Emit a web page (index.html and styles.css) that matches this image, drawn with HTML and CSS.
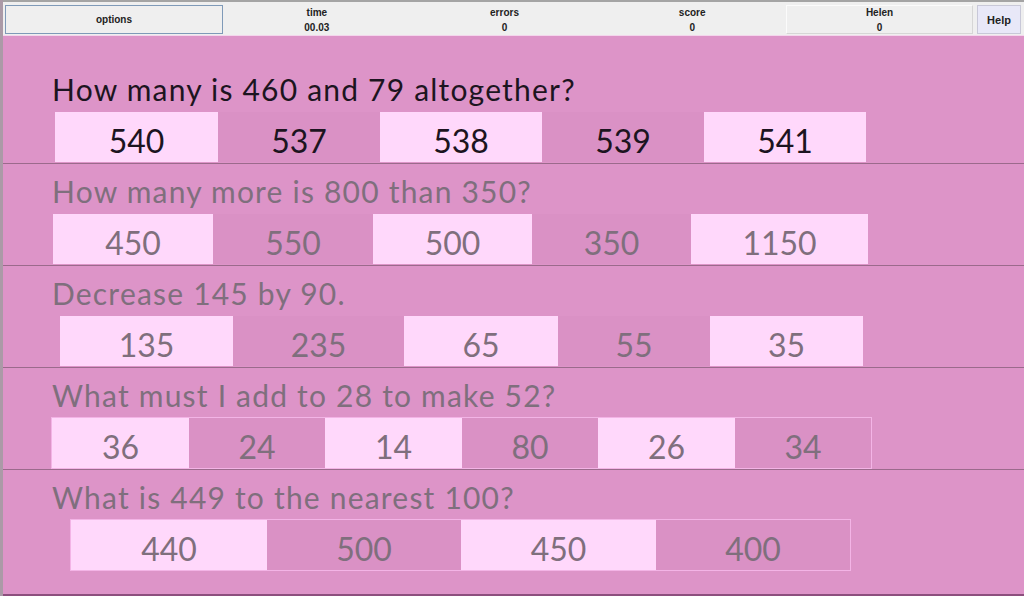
FILE: index.html
```html
<!DOCTYPE html>
<html lang="en">
<head>
    <meta charset="UTF-8">
    <title>Maths Quiz</title>
    <link rel="stylesheet" href="styles.css">
</head>
<body>

<div class="window">
    <!-- Top bar -->
    <div class="topbar">
        <div class="tb-options">options</div>
        <div class="tb-stat"><span>time</span><span>00.03</span></div>
        <div class="tb-stat"><span>errors</span><span>0</span></div>
        <div class="tb-stat"><span>score</span><span>0</span></div>
        <div class="tb-player"><span>Helen</span><span>0</span></div>
        <div class="tb-help">Help</div>
    </div>

    <!-- Questions -->
    <div class="quiz">
        <div class="row current">
            <div class="question">How many is 460 and 79 altogether?</div>
            <div class="answers r1">
                <div class="ans light">540</div>
                <div class="ans dark">537</div>
                <div class="ans light">538</div>
                <div class="ans dark">539</div>
                <div class="ans light">541</div>
            </div>
        </div>
        <div class="row">
            <div class="question">How many more is 800 than 350?</div>
            <div class="answers r2">
                <div class="ans light">450</div>
                <div class="ans dark">550</div>
                <div class="ans light">500</div>
                <div class="ans dark">350</div>
                <div class="ans light">1150</div>
            </div>
        </div>
        <div class="row">
            <div class="question">Decrease 145 by 90.</div>
            <div class="answers r3">
                <div class="ans light">135</div>
                <div class="ans dark">235</div>
                <div class="ans light">65</div>
                <div class="ans dark">55</div>
                <div class="ans light">35</div>
            </div>
        </div>
        <div class="row">
            <div class="question">What must I add to 28 to make 52?</div>
            <div class="answers r4 outlined">
                <div class="ans light">36</div>
                <div class="ans dark">24</div>
                <div class="ans light">14</div>
                <div class="ans dark">80</div>
                <div class="ans light">26</div>
                <div class="ans dark">34</div>
            </div>
        </div>
        <div class="row last">
            <div class="question">What is 449 to the nearest 100?</div>
            <div class="answers r5 outlined">
                <div class="ans light">440</div>
                <div class="ans dark">500</div>
                <div class="ans light">450</div>
                <div class="ans dark">400</div>
            </div>
        </div>
    </div>
</div>

</body>
</html>
```

FILE: styles.css
```css
body {
    margin: 0;
    padding: 0;
    background-color: #dd94c8;
    font-family: 'Liberation Sans', Arial, sans-serif;
}

.window {
    height: 596px;
    display: flex;
    flex-direction: column;
    border-left: 3px solid #ab9aa7;
    box-sizing: border-box;
}

/* top bar */
.topbar {
    height: 36px;
    box-sizing: border-box;
    display: flex;
    align-items: stretch;
    padding: 3px 3px 1px 2px;
    background-color: #efefef;
    border-top: 2px solid #a4a4a4;
    border-bottom: 1px solid #f4d6ec;
    font-size: 10px;
    font-weight: bold;
    color: #222;
}

.tb-options {
    width: 218px;
    box-sizing: border-box;
    border: 1px solid #7f9ab8;
    display: flex;
    align-items: center;
    justify-content: center;
}

.tb-stat, .tb-player {
    display: flex;
    flex-direction: column;
    align-items: center;
    justify-content: center;
    gap: 4px;
}

.tb-stat {
    flex: 1;
}

.tb-player {
    width: 187px;
    box-sizing: border-box;
    border: 1px solid #fbfbfb;
    border-right-color: #d6d6d6;
    border-bottom-color: #d6d6d6;
}

.tb-help {
    width: 44px;
    margin-left: 4px;
    box-sizing: border-box;
    background-color: #e8e8f8;
    border: 1px solid #c8c8d8;
    display: flex;
    align-items: center;
    justify-content: center;
    font-size: 11px;
}

/* quiz */
.quiz {
    flex: 1;
    padding-top: 26px;
    border-bottom: 2px solid #8c4f7e;
}

.row {
    padding: 0 0 1px 49px;
    border-bottom: 1px solid #9b6a8c;
    color: #7f6f7d;
    font-family: 'Lato', 'Open Sans', sans-serif;
}

.row.last {
    border-bottom: none;
}

.row.current {
    color: #1c1420;
}

.question {
    height: 50px;
    box-sizing: border-box;
    padding-top: 5px;
    line-height: 45px;
    font-size: 30px;
    letter-spacing: 1.2px;
    white-space: nowrap;
}

.answers {
    display: grid;
    height: 50px;
    box-sizing: border-box;
}

.answers.outlined {
    outline: 1px solid #f3b4e6;
}

.r1 { margin-left: 3px; grid-template-columns: 163px 162px 162px 162px 162px; width: 811px; }
.r2 { margin-left: 1px; grid-template-columns: 160px 160px 159px 159px 177px; width: 815px; }
.r3 { margin-left: 8px; grid-template-columns: 173px 171px 154px 152px 153px; width: 803px; }
.r4 { margin-left: 0; grid-template-columns: 137px 136px 137px 136px 137px 136px; width: 819px; }
.r5 { margin-left: 19px; grid-template-columns: 196px 194px 195px 194px; width: 779px; }

.ans {
    display: flex;
    align-items: center;
    justify-content: center;
    font-size: 32px;
    padding-top: 7px;
}

.ans.light {
    background-color: #ffd8fb;
}

.ans.dark {
    background-color: #da91c5;
}
```
